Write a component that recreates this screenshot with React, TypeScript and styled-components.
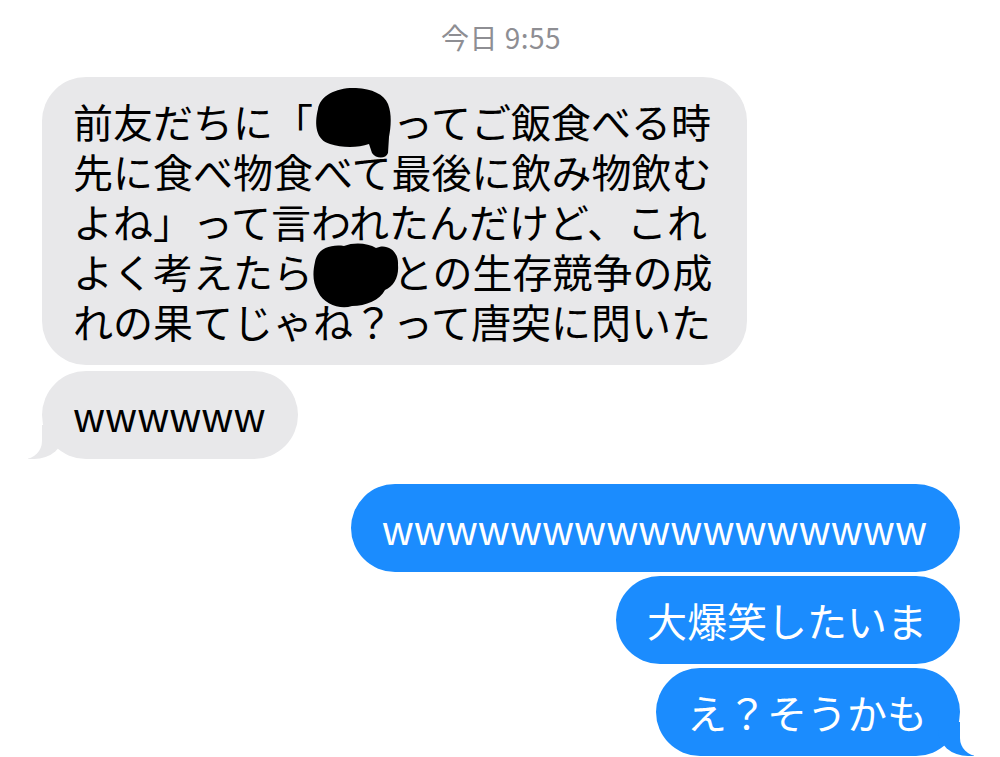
import React from 'react'
import styled, { createGlobalStyle } from 'styled-components'

const GlobalStyle = createGlobalStyle`
  html, body {
    margin: 0;
    padding: 0;
    background: #fff;
  }
  body {
    font-family: "Noto Sans CJK JP", "Noto Sans", sans-serif;
    overflow: hidden;
  }
`

const Page = styled.div`
  width: 1000px;
  height: 757px;
  box-sizing: border-box;
  padding: 21px 40px 0 42px;
  display: flex;
  flex-direction: column;
  overflow: hidden;
`

const Stamp = styled.div`
  align-self: center;
  color: #8e8e93;
  font-size: 28px;
  line-height: 32px;
  letter-spacing: 0.5px;
`

const Row = styled.div<{ $side: 'left' | 'right'; $gap: number }>`
  display: flex;
  justify-content: ${p => (p.$side === 'left' ? 'flex-start' : 'flex-end')};
  margin-top: ${p => p.$gap}px;
`

const Bubble = styled.div<{ $me?: boolean; $tail?: boolean; $width?: number }>`
  position: relative;
  box-sizing: border-box;
  padding: 19px 33px 19px 31px;
  border-radius: 44px;
  font-size: 40px;
  line-height: 50px;
  color: ${p => (p.$me ? '#fff' : '#000')};
  background: ${p => (p.$me ? '#1b8cfe' : '#e8e8ea')};
  ${p => p.$width && `width: ${p.$width}px;`}
  word-break: break-all;

  ${p =>
    p.$tail &&
    !p.$me &&
    `
    &::before {
      content: "";
      position: absolute;
      bottom: 0;
      left: -14px;
      width: 36px;
      height: 34px;
      background: #e8e8ea;
      border-bottom-right-radius: 30px 26px;
    }
    &::after {
      content: "";
      position: absolute;
      bottom: 0;
      left: -48px;
      width: 48px;
      height: 34px;
      background: #fff;
      border-bottom-right-radius: 18px;
    }
  `}

  ${p =>
    p.$tail &&
    p.$me &&
    `
    &::before {
      content: "";
      position: absolute;
      bottom: 0;
      right: -14px;
      width: 36px;
      height: 34px;
      background: #1b8cfe;
      border-bottom-left-radius: 30px 26px;
    }
    &::after {
      content: "";
      position: absolute;
      bottom: 0;
      right: -48px;
      width: 48px;
      height: 34px;
      background: #fff;
      border-bottom-left-radius: 18px;
    }
  `}
`

const Text = styled.span`
  position: relative;
  z-index: 1;
`

// redacted words: two ideographic spaces hold the place, a scribble lies over them
const Hidden = styled.span`
  position: relative;
  display: inline-block;
  width: 80px;
`

const Blob = styled.svg<{ $top: number; $left: number }>`
  position: absolute;
  top: ${p => p.$top}px;
  left: ${p => p.$left}px;
  overflow: visible;
`

function Redact({ kind }: { kind: 1 | 2 }) {
  return (
    <Hidden>
      {'\u3000\u3000'}
      {kind === 1 ? (
        <Blob $top={-9} $left={-1} width="80" height="72" viewBox="0 0 80 72">
          <path
            d="M6,22 C8,8 26,0 44,1 C60,2 72,7 76,17 C80,27 79,40 77,50 L76,66 C74,72 64,72 60,66 L57,57 C46,61 30,61 18,57 C4,53 2,38 6,22 Z"
            fill="#000"
          />
        </Blob>
      ) : (
        <Blob $top={-6} $left={-3} width="90" height="70" viewBox="0 0 90 70">
          <path
            d="M5,22 C7,9 20,4 34,6 C44,2 58,3 66,8 C76,3 89,10 88,25 C89,37 84,46 75,50 C70,60 56,66 42,66 C30,70 14,64 8,52 C2,42 3,31 5,22 Z"
            fill="#000"
          />
        </Blob>
      )}
    </Hidden>
  )
}

export default function App() {
  return (
    <Page>
      <GlobalStyle />
      <Stamp>今日 9:55</Stamp>

      <Row $side="left" $gap={24}>
        <Bubble $width={705}>
          <Text>
            前友だちに「<Redact kind={1} />ってご飯食べる時先に食べ物食べて最後に飲み物飲むよね」って言われたんだけど、これよく考えたら
            <Redact kind={2} />との生存競争の成れの果てじゃね？って唐突に閃いた
          </Text>
        </Bubble>
      </Row>

      <Row $side="left" $gap={6}>
        <Bubble $tail>
          <Text>wwwwww</Text>
        </Bubble>
      </Row>

      <Row $side="right" $gap={25}>
        <Bubble $me>
          <Text>wwwwwwwwwwwwwwwww</Text>
        </Bubble>
      </Row>

      <Row $side="right" $gap={4}>
        <Bubble $me>
          <Text>大爆笑したいま</Text>
        </Bubble>
      </Row>

      <Row $side="right" $gap={4}>
        <Bubble $me $tail>
          <Text>え？そうかも</Text>
        </Bubble>
      </Row>
    </Page>
  )
}
